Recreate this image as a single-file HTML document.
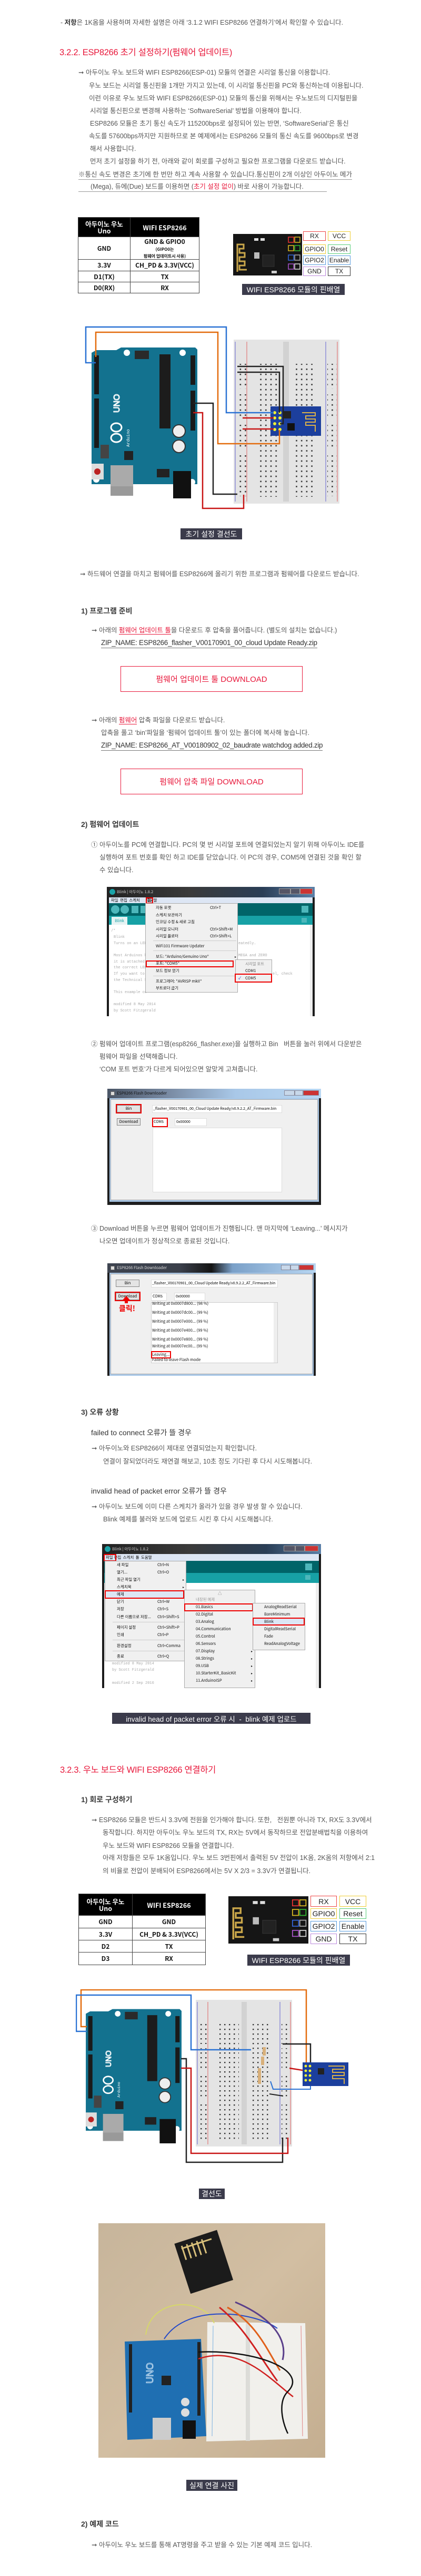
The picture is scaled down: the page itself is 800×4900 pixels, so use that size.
<!DOCTYPE html>
<html><head><meta charset="utf-8">
<style>
*{margin:0;padding:0;box-sizing:border-box}
body{width:800px;height:4900px;background:#fff;position:relative;overflow:hidden;font-family:"Liberation Sans","Noto Sans CJK KR",sans-serif}
.a{position:absolute}
.t{position:absolute;white-space:nowrap;font-size:12.5px;line-height:18px;color:#555;font-family:"Liberation Sans","Noto Sans CJK KR",sans-serif}
.h{position:absolute;white-space:nowrap;font-size:16.5px;line-height:22px;color:#e8173a;letter-spacing:-0.3px}
.s{position:absolute;white-space:nowrap;font-size:14px;line-height:20px;color:#3a3a3a;font-weight:bold}
.s2{position:absolute;white-space:nowrap;font-size:14px;line-height:20px;color:#333}
.r{color:#e8173a}
.ru{color:#e8173a;border-bottom:1px solid #e8173a}
.zip{position:absolute;white-space:nowrap;font-size:13.5px;line-height:18px;color:#333;border-bottom:1px solid #777;letter-spacing:-0.3px}
.box{position:absolute;border:1.5px solid #e8173a;color:#e8173a;font-size:15px;display:flex;align-items:center;justify-content:center}
.cap{position:absolute;background:#3b3b4b;color:#fff;font-size:14px;display:flex;align-items:center;justify-content:center;white-space:nowrap}
table.pt{position:absolute;border-collapse:collapse;font-family:"Noto Sans CJK KR",sans-serif;font-weight:bold;color:#111;text-align:center}
table.pt td{border:1.5px solid #444;padding:0;font-size:12px;line-height:13px}
table.pt tr.hd td{background:#000;color:#fff;font-size:12.5px}
.pl{position:absolute;width:43px;height:18px;border:1.5px solid;font-size:12px;display:flex;align-items:center;justify-content:center;background:#fff;color:#222}
.win{position:absolute;overflow:hidden;font-family:"Noto Sans CJK KR",sans-serif}
.mi{position:absolute;font-size:7.5px;line-height:10px;white-space:nowrap;color:#111}
.code{position:absolute;font-size:7px;line-height:9px;white-space:nowrap;color:#aaa;font-family:"Liberation Mono",monospace}
.rb{position:absolute;border:2px solid #e00}
</style></head><body>

<!-- Intro -->
<div class="t" style="left:115px;top:34px">- <b style="color:#333">저항</b>은 1K옴을 사용하며 자세한 설명은 아래 ‘3.1.2 WIFI ESP8266 연결하기’에서 확인할 수 있습니다.</div>

<div class="h" style="left:113px;top:89px">3.2.2. ESP8266 초기 설정하기(펌웨어 업데이트)</div>

<div class="t" style="left:149px;top:129px">➞ 아두이노 우노 보드와 WIFI ESP8266(ESP-01) 모듈의 연결은 시리얼 통신을 이용합니다.</div>
<div class="t" style="left:169px;top:154px">우노 보드는 시리얼 통신핀을 1개만 가지고 있는데, 이 시리얼 통신핀을 PC와 통신하는데 이용됩니다.</div>
<div class="t" style="left:169px;top:178px">이런 이유로 우노 보드와 WIFI ESP8266(ESP-01) 모듈의 통신을 위해서는 우노보드의 디지털핀을</div>
<div class="t" style="left:171px;top:202px">시리얼 통신핀으로 변경해 사용하는 ‘SoftwareSerial’ 방법을 이용해야 합니다.</div>
<div class="t" style="left:171px;top:226px">ESP8266 모듈은 초기 통신 속도가 115200bps로 설정되어 있는 반면, ‘SoftwareSerial’은 통신</div>
<div class="t" style="left:169px;top:250px">속도를 57600bps까지만 지원하므로 본 예제에서는 ESP8266 모듈의 통신 속도를 9600bps로 변경</div>
<div class="t" style="left:171px;top:274px">해서 사용합니다.</div>
<div class="t" style="left:171px;top:298px">먼저 초기 설정을 하기 전, 아래와 같이 회로를 구성하고 필요한 프로그램을 다운로드 받습니다.</div>
<div class="t" style="left:149px;top:323px;border-bottom:1px solid #999">※통신 속도 변경은 초기에 한 번만 하고 계속 사용할 수 있습니다.통신핀이 2개 이상인 아두이노 메가</div>
<div class="a" style="left:149px;top:346px;width:472px;height:19px;border-bottom:1px solid #999"></div>
<div class="t" style="left:172px;top:346px">(Mega), 듀에(Due) 보드를 이용하면 (<span class="r">초기 설정 없이</span>) 바로 사용이 가능합니다.</div>

<!-- Table 1 -->
<table class="pt" style="left:148px;top:413px;width:231px">
<tr class="hd" style="height:37px"><td style="width:99px">아두이노 우노<br>Uno</td><td>WIFI ESP8266</td></tr>
<tr style="height:43px"><td>GND</td><td>GND &amp; GPIO0<br><span style="font-size:8px;line-height:9px">(GIPO0는<br>펌웨어 업데이트시 사용)</span></td></tr>
<tr style="height:22px"><td>3.3V</td><td>CH_PD &amp; 3.3V(VCC)</td></tr>
<tr style="height:21px"><td>D1(TX)</td><td>TX</td></tr>
<tr style="height:21px"><td>D0(RX)</td><td>RX</td></tr>
</table>

<!-- ESP pin image 1 -->
<svg class="a" style="left:443px;top:445px" width="131" height="79" viewBox="0 0 131 79">
<rect width="131" height="79" fill="#151515"/>
<path d="M8 72 V20 h12 v8 h-8 v8 h10 v8 h-10 v8 h10 v8 h-10 v8 h14" stroke="#c9a64a" stroke-width="3" fill="none"/>
<rect x="40" y="8" width="8" height="5" fill="#ddd"/><rect x="52" y="8" width="8" height="5" fill="#ddd"/>
<rect x="56" y="40" width="22" height="22" fill="#222" stroke="#333"/>
<rect x="40" y="35" width="10" height="12" fill="#bbb"/>
<rect x="105" y="6" width="10" height="10" fill="none" stroke="#e33" stroke-width="1.5"/><rect x="117" y="6" width="10" height="10" fill="none" stroke="#db2" stroke-width="1.5"/>
<rect x="105" y="22" width="10" height="10" fill="none" stroke="#db2" stroke-width="1.5"/><rect x="117" y="22" width="10" height="10" fill="none" stroke="#3b3" stroke-width="1.5"/>
<rect x="105" y="40" width="10" height="10" fill="none" stroke="#36d" stroke-width="1.5"/><rect x="117" y="40" width="10" height="10" fill="none" stroke="#aaa" stroke-width="1.5"/>
<rect x="105" y="57" width="10" height="10" fill="none" stroke="#a5c" stroke-width="1.5"/><rect x="117" y="57" width="10" height="10" fill="none" stroke="#ddd" stroke-width="1.5"/>
<rect x="73" y="70" width="10" height="5" fill="#ccc"/>
</svg>
<div class="pl" style="left:576px;top:440px;border-color:#e44">RX</div><div class="pl" style="left:623px;top:440px;border-color:#ec3">VCC</div>
<div class="pl" style="left:576px;top:465px;border-color:#ec3">GPIO0</div><div class="pl" style="left:623px;top:465px;border-color:#5c7">Reset</div>
<div class="pl" style="left:576px;top:486px;border-color:#59d">GPIO2</div><div class="pl" style="left:623px;top:486px;border-color:#59d">Enable</div>
<div class="pl" style="left:576px;top:507px;border-color:#b8d">GND</div><div class="pl" style="left:623px;top:507px;border-color:#333">TX</div>
<div class="cap" style="left:460px;top:540px;width:195px;height:21px">WIFI ESP8266 모듈의 핀배열</div>

<!-- Diagram 1 -->
<svg class="a" style="left:161px;top:620px" width="484" height="350" viewBox="0 0 484 350">
<defs>
<pattern id="dt" width="9.7" height="9.7" patternUnits="userSpaceOnUse"><rect x="3.5" y="3.5" width="2.6" height="2.6" fill="#333"/></pattern>
</defs>
<rect x="283" y="26" width="201" height="312" fill="#e4e4e4"/>
<rect x="377" y="30" width="11" height="304" fill="#d2d2d2"/>
<line x1="286" y1="30" x2="286" y2="334" stroke="#44c" stroke-width="0.8"/><line x1="308" y1="30" x2="308" y2="334" stroke="#d44" stroke-width="0.8"/>
<line x1="458" y1="30" x2="458" y2="334" stroke="#44c" stroke-width="0.8"/><line x1="480" y1="30" x2="480" y2="334" stroke="#d44" stroke-width="0.8"/>
<rect x="329" y="72" width="42" height="253" fill="url(#dt)"/>
<rect x="397" y="72" width="42" height="253" fill="url(#dt)"/>
<rect x="289" y="72" width="18" height="48" fill="url(#dt)"/><rect x="289" y="130" width="18" height="48" fill="url(#dt)"/><rect x="289" y="188" width="18" height="48" fill="url(#dt)"/><rect x="289" y="246" width="18" height="78" fill="url(#dt)"/>
<rect x="461" y="72" width="18" height="48" fill="url(#dt)"/><rect x="461" y="130" width="18" height="48" fill="url(#dt)"/><rect x="461" y="188" width="18" height="48" fill="url(#dt)"/><rect x="461" y="246" width="18" height="78" fill="url(#dt)"/>
<!-- arduino -->
<path d="M13 51 L22 46 H60 L69 41 H210 L214 45 V301 H13 Z" fill="#13728f"/>
<rect x="18" y="56" width="9" height="74" fill="#1a1a1a"/><rect x="18" y="138" width="9" height="94" fill="#1a1a1a"/>
<rect x="201" y="56" width="9" height="56" fill="#1a1a1a"/><rect x="201" y="123" width="9" height="76" fill="#1a1a1a"/>
<rect x="142" y="54" width="21" height="141" fill="#1c1c1c"/>
<rect x="95" y="47" width="27" height="16" fill="#2a2a2a"/>
<circle cx="80" cy="51" r="6" fill="#fff"/><circle cx="186" cy="51" r="6" fill="#fff"/><circle cx="22" cy="292" r="6" fill="#fff"/><circle cx="204" cy="297" r="6" fill="#fff"/>
<circle cx="179" cy="200" r="12" fill="#eee" stroke="#333" stroke-width="2"/><circle cx="179" cy="229" r="12" fill="#eee" stroke="#333" stroke-width="2"/>
<rect x="75" y="238" width="17" height="17" fill="#222"/>
<rect x="30" y="226" width="16" height="26" fill="#444"/>
<rect x="13" y="262" width="23" height="30" fill="#ddd"/><circle cx="24" cy="277" r="6" fill="#b22"/>
<rect x="49" y="265" width="43" height="58" fill="#aaa"/><rect x="49" y="305" width="43" height="18" fill="#999"/>
<rect x="168" y="276" width="34" height="52" fill="#111"/>
<rect x="137" y="272" width="24" height="16" fill="#222"/>
<text transform="translate(66,165) rotate(-90)" font-size="16" fill="none" stroke="#fff" stroke-width="1.2" font-family="Liberation Sans">UNO</text>
<ellipse cx="60" cy="193" rx="10" ry="8" fill="none" stroke="#fff" stroke-width="3"/><ellipse cx="60" cy="213" rx="10" ry="8" fill="none" stroke="#fff" stroke-width="3"/>
<text transform="translate(85,230) rotate(-90)" font-size="8" fill="#fff" font-family="Liberation Mono">Arduino</text>
<!-- esp -->
<rect x="353" y="153" width="96" height="56" fill="#1c3f9d"/>
<path d="M413 165 h25 v6 h-18 v6 h18 v6 h-18 v6 h18 v12" stroke="#d9b04a" stroke-width="2" fill="none"/>
<rect x="378" y="162" width="14" height="14" fill="#222"/><rect x="385" y="185" width="14" height="14" fill="#111"/>
<circle cx="361" cy="165" r="3" fill="#ee3"/><circle cx="371" cy="165" r="3" fill="#ee3"/><circle cx="361" cy="175" r="3" fill="#ee3"/><circle cx="371" cy="175" r="3" fill="#ee3"/><circle cx="361" cy="186" r="3" fill="#ee3"/><circle cx="371" cy="186" r="3" fill="#ee3"/><circle cx="361" cy="197" r="3" fill="#ee3"/><circle cx="371" cy="197" r="3" fill="#ee3"/>
<!-- wires -->
<polyline points="21,59 21,12 253,12 253,224 370,224 370,198" fill="none" stroke="#e36b0c" stroke-width="2.5"/>
<polyline points="21,70 2,70 2,2 269,2 269,165 359,165" fill="none" stroke="#2a72d4" stroke-width="2.5"/>
<polyline points="206,147 244,147 244,320 290,320" fill="none" stroke="#222" stroke-width="2.5"/>
<polyline points="206,165 224,165 224,347 302,347 302,321" fill="none" stroke="#c81414" stroke-width="2.5"/>
<polyline points="290,77 377,77 377,186 371,186" fill="none" stroke="#222" stroke-width="2.5"/>
<polyline points="290,88 370,88 370,165" fill="none" stroke="#222" stroke-width="2.5"/>
<line x1="300" y1="175" x2="359" y2="175" stroke="#c81414" stroke-width="2.5"/>
<line x1="300" y1="196" x2="359" y2="196" stroke="#c81414" stroke-width="2.5"/>
</svg>
<div class="cap" style="left:343px;top:1005px;width:117px;height:21px">초기 설정 결선도</div>

<div class="t" style="left:152px;top:1083px">➞ 하드웨어 연결을 마치고 펌웨어를 ESP8266에 올리기 위한 프로그램과 펌웨어를 다운로드 받습니다.</div>

<div class="s" style="left:154px;top:1152px">1) 프로그램 준비</div>
<div class="t" style="left:174px;top:1190px">➞ 아래의 <span class="ru">펌웨어 업데이트 툴</span>을 다운로드 후 압축을 풀어줍니다. (별도의 설치는 없습니다.)</div>
<div class="zip" style="left:192px;top:1214px">ZIP_NAME: ESP8266_flasher_V00170901_00_cloud Update Ready.zip</div>
<div class="box" style="left:229px;top:1267px;width:346px;height:49px">펌웨어 업데이트 툴 DOWNLOAD</div>

<div class="t" style="left:174px;top:1361px">➞ 아래의 <span class="ru">펌웨어</span> 압축 파일을 다운로드 받습니다.</div>
<div class="t" style="left:192px;top:1385px">압축을 풀고 ‘bin’파일을 ‘펌웨어 업데이트 툴’이 있는 폴더에 복사해 놓습니다.</div>
<div class="zip" style="left:192px;top:1409px">ZIP_NAME: ESP8266_AT_V00180902_02_baudrate watchdog added.zip</div>
<div class="box" style="left:229px;top:1462px;width:346px;height:49px">펌웨어 압축 파일 DOWNLOAD</div>

<div class="s" style="left:154px;top:1558px">2) 펌웨어 업데이트</div>
<div class="t" style="left:173px;top:1598px">① 아두이노를 PC에 연결합니다. PC의 몇 번 시리얼 포트에 연결되었는지 알기 위해 아두이노 IDE를</div>
<div class="t" style="left:189px;top:1622px">실행하여 포트 번호를 확인 하고 IDE를 닫았습니다. 이 PC의 경우, COM5에 연결된 것을 확인 할</div>
<div class="t" style="left:189px;top:1646px">수 있습니다.</div>

<!-- Screenshot 1 -->
<div class="win" style="left:203px;top:1687px;width:395px;height:246px;background:#1b1b1b">
 <div class="a" style="left:0;top:0;width:395px;height:20px;background:linear-gradient(90deg,#222 0%,#3a3a3a 40%,#2a3e56 75%,#5a7fa8 100%)"></div>
 <div class="a" style="left:5px;top:4px;width:11px;height:11px;border-radius:50%;background:#1aa3a8"></div>
 <div class="mi" style="left:19px;top:5px;color:#ccc">Blink | 아두이노 1.8.2</div>
 <div class="a" style="left:327px;top:3px;width:22px;height:11px;background:#556;border:1px solid #999"></div>
 <div class="a" style="left:349px;top:3px;width:18px;height:11px;background:#556;border:1px solid #999"></div>
 <div class="a" style="left:367px;top:3px;width:24px;height:11px;background:#c33;border:1px solid #999"></div>
 <div class="a" style="left:4px;top:20px;width:387px;height:11px;background:#dde6f4"></div>
 <div class="mi" style="left:8px;top:21px">파일 &nbsp;편집 &nbsp;스케치 &nbsp;&nbsp;&nbsp;&nbsp;&nbsp;&nbsp;도움말</div>
 <div class="mi" style="left:77px;top:21px">툴</div>
 <div class="rb" style="left:74px;top:20px;width:14px;height:12px"></div>
 <div class="a" style="left:4px;top:31px;width:387px;height:24px;background:#006468"></div>
 <div class="a" style="left:8px;top:35px;width:16px;height:16px;border-radius:50%;background:#4db7bb"></div>
 <div class="a" style="left:26px;top:35px;width:16px;height:16px;border-radius:50%;background:#4db7bb"></div>
 <div class="a" style="left:47px;top:36px;width:13px;height:14px;background:#4db7bb"></div>
 <div class="a" style="left:64px;top:36px;width:13px;height:14px;background:#4db7bb"></div>
 <div class="a" style="left:370px;top:36px;width:13px;height:13px;background:#4db7bb"></div>
 <div class="a" style="left:4px;top:55px;width:387px;height:17px;background:#17a1a5"></div>
 <div class="a" style="left:9px;top:57px;width:30px;height:15px;background:#e6f3f3;font-size:7.5px;color:#17a1a5;text-align:center;line-height:15px">Blink</div>
 <div class="a" style="left:370px;top:59px;width:10px;height:9px;background:#4db7bb"></div>
 <div class="a" style="left:4px;top:72px;width:382px;height:174px;background:#fff"></div>
 <div class="a" style="left:386px;top:72px;width:5px;height:174px;background:#eee"></div>
 <div class="code" style="left:8px;top:80px">/*</div>
 <div class="code" style="left:13px;top:92px">Blink</div>
 <div class="code" style="left:13px;top:104px">Turns on an LED</div>
 <div class="code" style="left:250px;top:104px">eatedly.</div>
 <div class="code" style="left:13px;top:127px">Most Arduinos h</div>
 <div class="code" style="left:250px;top:127px">MEGA and ZERO</div>
 <div class="code" style="left:13px;top:139px">it is attached</div>
 <div class="code" style="left:13px;top:150px">the correct LED</div>
 <div class="code" style="left:13px;top:162px">If you want to</div>
 <div class="code" style="left:315px;top:162px">el, check</div>
 <div class="code" style="left:13px;top:174px">the Technical S</div>
 <div class="code" style="left:13px;top:197px">This example co</div>
 <div class="code" style="left:13px;top:220px">modified 8 May 2014</div>
 <div class="code" style="left:13px;top:232px">by Scott Fitzgerald</div>
 <div class="a" style="left:73px;top:31px;width:176px;height:170px;background:#f0f0f0;border:1px solid #aaa"></div>
 <div class="mi" style="left:93px;top:35px">자동 포맷</div><div class="mi" style="left:196px;top:35px">Ctrl+T</div>
 <div class="mi" style="left:93px;top:49px">스케치 보관하기</div>
 <div class="mi" style="left:93px;top:62px">인코딩 수정 &amp; 새로 고침</div>
 <div class="mi" style="left:93px;top:76px">시리얼 모니터</div><div class="mi" style="left:196px;top:76px">Ctrl+Shift+M</div>
 <div class="mi" style="left:93px;top:89px">시리얼 플로터</div><div class="mi" style="left:196px;top:89px">Ctrl+Shift+L</div>
 <div class="a" style="left:88px;top:102px;width:158px;height:1px;background:#ccc"></div>
 <div class="mi" style="left:93px;top:108px">WiFi101 Firmware Updater</div>
 <div class="a" style="left:88px;top:121px;width:158px;height:1px;background:#ccc"></div>
 <div class="mi" style="left:93px;top:128px">보드: "Arduino/Genuino Uno"</div><div class="mi" style="left:243px;top:128px;font-size:6px">▸</div>
 <div class="mi" style="left:93px;top:141px">포트: "COM5"</div>
 <div class="rb" style="left:74px;top:140px;width:167px;height:13px"></div>
 <div class="mi" style="left:93px;top:155px">보드 정보 얻기</div>
 <div class="a" style="left:88px;top:169px;width:158px;height:1px;background:#ccc"></div>
 <div class="mi" style="left:93px;top:175px">프로그래머: "AVRISP mkII"</div>
 <div class="mi" style="left:93px;top:188px">부트로더 굽기</div>
 <div class="a" style="left:244px;top:138px;width:70px;height:44px;background:#f0f0f0;border:1px solid #aaa"></div>
 <div class="mi" style="left:263px;top:142px;color:#888">시리얼 포트</div>
 <div class="mi" style="left:263px;top:155px">COM1</div>
 <div class="mi" style="left:250px;top:169px;color:#22c">✓</div><div class="mi" style="left:263px;top:169px">COM5</div>
 <div class="rb" style="left:243px;top:165px;width:71px;height:17px"></div>
</div>

<div class="t" style="left:173px;top:1977px">② 펌웨어 업데이트 프로그램(esp8266_flasher.exe)을 실행하고 Bin &nbsp;&nbsp;버튼을 눌러 위에서 다운받은</div>
<div class="t" style="left:189px;top:2001px">펌웨어 파일을 선택해줍니다.</div>
<div class="t" style="left:189px;top:2025px">‘COM 포트 번호’가 다르게 되어있으면 알맞게 고쳐줍니다.</div>

<!-- Screenshot 2 -->
<div class="win" style="left:204px;top:2071px;width:406px;height:221px;background:#1e1e1e">
 <div class="a" style="left:0;top:0;width:406px;height:18px;background:linear-gradient(90deg,#4a5566 0%,#7b8da6 30%,#a9c8e8 60%,#b8d6f2 100%)"></div>
 <div class="a" style="left:6px;top:5px;width:8px;height:8px;background:#ddd;border:1px solid #666"></div>
 <div class="mi" style="left:18px;top:4px;color:#111">ESP8266 Flash Downloader</div>
 <div class="a" style="left:336px;top:3px;width:20px;height:10px;background:#c8d8ea;border:1px solid #889"></div>
 <div class="a" style="left:356px;top:3px;width:16px;height:10px;background:#c8d8ea;border:1px solid #889"></div>
 <div class="a" style="left:372px;top:3px;width:30px;height:10px;background:#c33;border:1px solid #889"></div>
 <div class="a" style="left:4px;top:18px;width:398px;height:197px;background:#a9c8e8"></div>
 <div class="a" style="left:6px;top:20px;width:394px;height:192px;background:#f0f0f0;border:1px solid #aaa"></div>
 <div class="a" style="left:18px;top:31px;width:45px;height:14px;background:#e4e4e4;border:1px solid #888;font-size:7.5px;text-align:center;line-height:12px">Bin</div>
 <div class="rb" style="left:16px;top:29px;width:49px;height:18px"></div>
 <div class="a" style="left:18px;top:56px;width:45px;height:14px;background:#e4e4e4;border:1px solid #888;font-size:7.5px;text-align:center;line-height:12px">Download</div>
 <div class="a" style="left:85px;top:31px;width:247px;height:15px;background:#fff;border:1px solid #ddd;font-size:7px;line-height:13px;white-space:nowrap;padding-left:1px">_flasher_V00170901_00_Cloud Update Ready/v0.9.2.2_AT_Firmware.bin</div>
 <div class="a" style="left:86px;top:56px;width:28px;height:15px;background:#fff;font-size:7px;line-height:15px;padding-left:2px">COM5</div>
 <div class="rb" style="left:85px;top:55px;width:30px;height:18px"></div>
 <div class="a" style="left:128px;top:56px;width:61px;height:15px;background:#fff;border:1px solid #ddd;font-size:7px;line-height:13px;padding-left:2px">0x00000</div>
 <div class="a" style="left:86px;top:74px;width:246px;height:123px;background:#fff;border:1px solid #ddd"></div>
</div>

<div class="t" style="left:173px;top:2328px">③ Download 버튼을 누르면 펌웨어 업데이트가 진행됩니다. 맨 마지막에 ‘Leaving...’ 메시지가</div>
<div class="t" style="left:189px;top:2352px">나오면 업데이트가 정상적으로 종료된 것입니다.</div>

<!-- Screenshot 3 -->
<div class="win" style="left:204px;top:2403px;width:396px;height:214px;background:#1e1e1e">
 <div class="a" style="left:0;top:0;width:396px;height:18px;background:linear-gradient(90deg,#3e4450 0%,#3a3f4a 35%,#141414 50%,#7aa0c8 60%,#b8d6f2 100%)"></div>
 <div class="a" style="left:6px;top:5px;width:8px;height:8px;background:#ddd;border:1px solid #666"></div>
 <div class="mi" style="left:18px;top:4px;color:#ddd">ESP8266 Flash Downloader</div>
 <div class="a" style="left:330px;top:3px;width:18px;height:10px;background:#c8d8ea;border:1px solid #889"></div>
 <div class="a" style="left:348px;top:3px;width:16px;height:10px;background:#c8d8ea;border:1px solid #889"></div>
 <div class="a" style="left:364px;top:3px;width:28px;height:10px;background:#c33;border:1px solid #889"></div>
 <div class="a" style="left:4px;top:18px;width:388px;height:196px;background:#a9c8e8"></div>
 <div class="a" style="left:6px;top:20px;width:384px;height:191px;background:#f0f0f0;border:1px solid #aaa"></div>
 <div class="a" style="left:16px;top:31px;width:45px;height:14px;background:#e4e4e4;border:1px solid #888;font-size:7.5px;text-align:center;line-height:12px">Bin</div>
 <div class="a" style="left:16px;top:56px;width:45px;height:14px;background:#e4e4e4;border:1px solid #888;font-size:7.5px;text-align:center;line-height:12px">Download</div>
 <div class="rb" style="left:14px;top:54px;width:49px;height:18px"></div>
 <div class="a" style="left:29px;top:62px;width:0;height:0;border-left:7px solid transparent;border-right:7px solid transparent;border-bottom:8px solid #e00"></div>
 <div class="a" style="left:33px;top:69px;width:6px;height:7px;background:#e00"></div>
 <div class="a" style="left:22px;top:76px;font-size:14px;font-weight:bold;color:#e00;white-space:nowrap">클릭!</div>
 <div class="a" style="left:83px;top:31px;width:241px;height:15px;background:#fff;border:1px solid #ddd;font-size:7px;line-height:13px;white-space:nowrap;padding-left:1px">_flasher_V00170901_00_Cloud Update Ready/v0.9.2.2_AT_Firmware.bin</div>
 <div class="a" style="left:83px;top:56px;width:30px;height:15px;background:#fff;border:1px solid #ddd;font-size:7px;line-height:13px;padding-left:2px">COM5</div>
 <div class="a" style="left:127px;top:56px;width:59px;height:15px;background:#fff;border:1px solid #ddd;font-size:7px;line-height:13px;padding-left:2px">0x00000</div>
 <div class="a" style="left:83px;top:74px;width:241px;height:116px;background:#fff;border:1px solid #ccc"></div>
 <div class="a" style="left:316px;top:75px;width:7px;height:114px;background:#eee"></div>
 <div class="mi" style="left:85px;top:72px">Writing at 0x0007d800... (98 %)</div>
 <div class="mi" style="left:85px;top:89px">Writing at 0x0007dc00... (99 %)</div>
 <div class="mi" style="left:85px;top:106px">Writing at 0x0007e000... (99 %)</div>
 <div class="mi" style="left:85px;top:123px">Writing at 0x0007e400... (99 %)</div>
 <div class="mi" style="left:85px;top:140px">Writing at 0x0007e800... (99 %)</div>
 <div class="mi" style="left:85px;top:153px">Writing at 0x0007ec00... (99 %)</div>
 <div class="mi" style="left:85px;top:169px">Leaving...</div>
 <div class="rb" style="left:83px;top:167px;width:38px;height:14px"></div>
 <div class="mi" style="left:85px;top:179px">Failed to leave Flash mode</div>
</div>

<div class="s" style="left:154px;top:2676px">3) 오류 상황</div>
<div class="s2" style="left:173px;top:2715px">failed to connect 오류가 뜰 경우</div>
<div class="t" style="left:174px;top:2746px">➞ 아두이노와 ESP8266이 제대로 연결되었는지 확인합니다.</div>
<div class="t" style="left:196px;top:2771px">연결이 잘되었더라도 재연결 해보고, 10초 정도 기다린 후 다시 시도해봅니다.</div>
<div class="s2" style="left:173px;top:2826px">invalid head of packet error 오류가 뜰 경우</div>
<div class="t" style="left:174px;top:2857px">➞ 아두이노 보드에 이미 다른 스케치가 올라가 있을 경우 발생 할 수 있습니다.</div>
<div class="t" style="left:196px;top:2881px">Blink 예제를 불러와 보드에 업로드 시킨 후 다시 시도해봅니다.</div>

<!-- Screenshot 4 -->
<div class="win" style="left:194px;top:2937px;width:416px;height:274px;background:#1b1b1b">
 <div class="a" style="left:0;top:0;width:416px;height:19px;background:linear-gradient(90deg,#222 0%,#3a3a3a 40%,#2a3e56 75%,#5a7fa8 100%)"></div>
 <div class="a" style="left:5px;top:4px;width:11px;height:11px;border-radius:50%;background:#1aa3a8"></div>
 <div class="mi" style="left:19px;top:5px;color:#ccc">Blink | 아두이노 1.8.2</div>
 <div class="a" style="left:345px;top:3px;width:22px;height:11px;background:#556;border:1px solid #999"></div>
 <div class="a" style="left:367px;top:3px;width:18px;height:11px;background:#556;border:1px solid #999"></div>
 <div class="a" style="left:385px;top:3px;width:26px;height:11px;background:#c33;border:1px solid #999"></div>
 <div class="a" style="left:4px;top:19px;width:408px;height:13px;background:#dde6f4"></div>
 <div class="mi" style="left:7px;top:21px">파일 편집 &nbsp;스케치 &nbsp;툴 &nbsp;도움말</div>
 <div class="rb" style="left:3px;top:19px;width:24px;height:14px"></div>
 <div class="a" style="left:4px;top:32px;width:408px;height:23px;background:#006468"></div>
 <div class="a" style="left:386px;top:37px;width:13px;height:13px;background:#4db7bb"></div>
 <div class="a" style="left:4px;top:55px;width:408px;height:19px;background:#17a1a5"></div>
 <div class="a" style="left:386px;top:59px;width:10px;height:9px;background:#4db7bb"></div>
 <div class="a" style="left:4px;top:74px;width:402px;height:200px;background:#fff"></div>
 <div class="a" style="left:406px;top:74px;width:6px;height:200px;background:#eee"></div>
 <div class="code" style="left:19px;top:224px">modified 8 May 2014</div>
 <div class="code" style="left:19px;top:236px">by Scott Fitzgerald</div>
 <div class="code" style="left:19px;top:261px">modified 2 Sep 2016</div>
 <div class="a" style="left:5px;top:32px;width:155px;height:191px;background:#f0f0f0;border:1px solid #aaa"></div>
 <div class="mi" style="left:28px;top:35px">새 파일</div><div class="mi" style="left:105px;top:35px">Ctrl+N</div>
 <div class="mi" style="left:28px;top:49px">열기...</div><div class="mi" style="left:105px;top:49px">Ctrl+O</div>
 <div class="mi" style="left:28px;top:63px">최근 파일 열기</div><div class="mi" style="left:153px;top:63px;font-size:6px">▸</div>
 <div class="mi" style="left:28px;top:77px">스케치북</div><div class="mi" style="left:153px;top:77px;font-size:6px">▸</div>
 <div class="a" style="left:6px;top:88px;width:150px;height:15px;background:#dce6f4"></div>
 <div class="mi" style="left:28px;top:91px">예제</div>
 <div class="rb" style="left:5px;top:88px;width:151px;height:16px"></div>
 <div class="mi" style="left:28px;top:105px">닫기</div><div class="mi" style="left:105px;top:105px">Ctrl+W</div>
 <div class="mi" style="left:28px;top:119px">저장</div><div class="mi" style="left:105px;top:119px">Ctrl+S</div>
 <div class="mi" style="left:28px;top:134px">다른 이름으로 저장...</div><div class="mi" style="left:105px;top:134px">Ctrl+Shift+S</div>
 <div class="a" style="left:20px;top:148px;width:138px;height:1px;background:#ccc"></div>
 <div class="mi" style="left:28px;top:154px">페이지 설정</div><div class="mi" style="left:105px;top:154px">Ctrl+Shift+P</div>
 <div class="mi" style="left:28px;top:168px">인쇄</div><div class="mi" style="left:105px;top:168px">Ctrl+P</div>
 <div class="a" style="left:20px;top:182px;width:138px;height:1px;background:#ccc"></div>
 <div class="mi" style="left:28px;top:189px">환경설정</div><div class="mi" style="left:105px;top:189px">Ctrl+Comma</div>
 <div class="a" style="left:20px;top:203px;width:138px;height:1px;background:#ccc"></div>
 <div class="mi" style="left:28px;top:209px">종료</div><div class="mi" style="left:105px;top:209px">Ctrl+Q</div>
 <div class="a" style="left:156px;top:87px;width:135px;height:187px;background:#f0f0f0;border:1px solid #aaa"></div>
 <div class="mi" style="left:220px;top:89px;color:#666">△</div>
 <div class="mi" style="left:178px;top:101px;color:#999">내장된 예제</div>
 <div class="mi" style="left:178px;top:115px">01.Basics</div>
 <div class="rb" style="left:156px;top:113px;width:131px;height:15px"></div>
 <div class="mi" style="left:178px;top:129px">02.Digital</div>
 <div class="mi" style="left:178px;top:143px">03.Analog</div>
 <div class="mi" style="left:178px;top:157px">04.Communication</div>
 <div class="mi" style="left:178px;top:171px">05.Control</div>
 <div class="mi" style="left:178px;top:185px">06.Sensors</div>
 <div class="mi" style="left:178px;top:199px">07.Display</div><div class="mi" style="left:283px;top:199px;font-size:6px">▸</div>
 <div class="mi" style="left:178px;top:213px">08.Strings</div><div class="mi" style="left:283px;top:213px;font-size:6px">▸</div>
 <div class="mi" style="left:178px;top:227px">09.USB</div><div class="mi" style="left:283px;top:227px;font-size:6px">▸</div>
 <div class="mi" style="left:178px;top:241px">10.StarterKit_BasicKit</div><div class="mi" style="left:283px;top:241px;font-size:6px">▸</div>
 <div class="mi" style="left:178px;top:255px">11.ArduinoISP</div><div class="mi" style="left:283px;top:255px;font-size:6px">▸</div>
 <div class="a" style="left:286px;top:112px;width:100px;height:90px;background:#f0f0f0;border:1px solid #aaa"></div>
 <div class="mi" style="left:308px;top:115px">AnalogReadSerial</div>
 <div class="mi" style="left:308px;top:129px">BareMinimum</div>
 <div class="a" style="left:287px;top:141px;width:97px;height:13px;background:#dce6f4"></div>
 <div class="mi" style="left:308px;top:143px">Blink</div>
 <div class="rb" style="left:286px;top:140px;width:99px;height:15px"></div>
 <div class="mi" style="left:308px;top:157px">DigitalReadSerial</div>
 <div class="mi" style="left:308px;top:171px">Fade</div>
 <div class="mi" style="left:308px;top:185px">ReadAnalogVoltage</div>
</div>
<div class="cap" style="left:213px;top:3258px;width:377px;height:21px;font-size:13.5px">invalid head of packet error 오류 시 &nbsp;- &nbsp;blink 예제 업로드</div>

<!-- 3.2.3 -->
<div class="h" style="left:114px;top:3356px">3.2.3. 우노 보드와 WIFI ESP8266 연결하기</div>
<div class="s" style="left:154px;top:3413px">1) 회로 구성하기</div>
<div class="t" style="left:174px;top:3453px">➞ ESP8266 모듈은 반드시 3.3V에 전원을 인가해야 합니다. 또한, &nbsp;&nbsp;전원뿐 아니라 TX, RX도 3.3V에서</div>
<div class="t" style="left:195px;top:3477px">동작합니다. 하지만 아두이노 우노 보드의 TX, RX는 5V에서 동작하므로 전압분배법칙을 이용하여</div>
<div class="t" style="left:195px;top:3502px">우노 보드와 WIFI ESP8266 모듈을 연결합니다.</div>
<div class="t" style="left:195px;top:3525px">아래 저항들은 모두 1K옴입니다. 우노 보드 3번핀에서 출력된 5V 전압이 1K옴, 2K옴의 저항에서 2:1</div>
<div class="t" style="left:195px;top:3550px">의 비율로 전압이 분배되어 ESP8266에서는 5V X 2/3 = 3.3V가 연결됩니다.</div>

<table class="pt" style="left:149px;top:3602px;width:242px">
<tr class="hd" style="height:41px"><td style="width:102px">아두이노 우노<br>Uno</td><td>WIFI ESP8266</td></tr>
<tr style="height:24px"><td>GND</td><td>GND</td></tr>
<tr style="height:23px"><td>3.3V</td><td>CH_PD &amp; 3.3V(VCC)</td></tr>
<tr style="height:23px"><td>D2</td><td>TX</td></tr>
<tr style="height:24px"><td>D3</td><td>RX</td></tr>
</table>

<svg class="a" style="left:434px;top:3607px" width="152" height="90" viewBox="0 0 131 79" preserveAspectRatio="none">
<rect width="131" height="79" fill="#151515"/>
<path d="M8 72 V20 h12 v8 h-8 v8 h10 v8 h-10 v8 h10 v8 h-10 v8 h14" stroke="#c9a64a" stroke-width="3" fill="none"/>
<rect x="40" y="8" width="8" height="5" fill="#ddd"/><rect x="52" y="8" width="8" height="5" fill="#ddd"/>
<rect x="56" y="40" width="22" height="22" fill="#222" stroke="#333"/>
<rect x="40" y="35" width="10" height="12" fill="#bbb"/>
<rect x="105" y="6" width="10" height="10" fill="none" stroke="#e33" stroke-width="1.5"/><rect x="117" y="6" width="10" height="10" fill="none" stroke="#db2" stroke-width="1.5"/>
<rect x="105" y="22" width="10" height="10" fill="none" stroke="#db2" stroke-width="1.5"/><rect x="117" y="22" width="10" height="10" fill="none" stroke="#3b3" stroke-width="1.5"/>
<rect x="105" y="40" width="10" height="10" fill="none" stroke="#36d" stroke-width="1.5"/><rect x="117" y="40" width="10" height="10" fill="none" stroke="#aaa" stroke-width="1.5"/>
<rect x="105" y="57" width="10" height="10" fill="none" stroke="#a5c" stroke-width="1.5"/><rect x="117" y="57" width="10" height="10" fill="none" stroke="#ddd" stroke-width="1.5"/>
<rect x="73" y="70" width="10" height="5" fill="#ccc"/>
</svg>
<div class="pl" style="left:590px;top:3606px;width:50px;height:21px;font-size:14px;border-color:#e44">RX</div><div class="pl" style="left:645px;top:3606px;width:51px;height:21px;font-size:14px;border-color:#ec3">VCC</div>
<div class="pl" style="left:590px;top:3630px;width:50px;height:20px;font-size:14px;border-color:#ec3">GPIO0</div><div class="pl" style="left:645px;top:3630px;width:51px;height:20px;font-size:14px;border-color:#5c7">Reset</div>
<div class="pl" style="left:590px;top:3654px;width:50px;height:20px;font-size:14px;border-color:#59d">GPIO2</div><div class="pl" style="left:645px;top:3654px;width:51px;height:20px;font-size:14px;border-color:#59d">Enable</div>
<div class="pl" style="left:590px;top:3678px;width:50px;height:20px;font-size:14px;border-color:#b8d">GND</div><div class="pl" style="left:645px;top:3678px;width:51px;height:20px;font-size:14px;border-color:#333">TX</div>
<div class="cap" style="left:470px;top:3718px;width:195px;height:21px">WIFI ESP8266 모듈의 핀배열</div>

<!-- Diagram 2 -->
<svg class="a" style="left:144px;top:3784px" width="518" height="331" viewBox="0 0 518 331">
<defs>
<pattern id="dt2" width="9" height="9" patternUnits="userSpaceOnUse"><rect x="3" y="3" width="2.4" height="2.4" fill="#333"/></pattern>
</defs>
<rect x="228" y="20" width="183" height="279" fill="#e4e4e4"/>
<rect x="315" y="24" width="10" height="271" fill="#d2d2d2"/>
<line x1="231" y1="24" x2="231" y2="295" stroke="#44c" stroke-width="0.8"/><line x1="251" y1="24" x2="251" y2="295" stroke="#d44" stroke-width="0.8"/>
<line x1="388" y1="24" x2="388" y2="295" stroke="#44c" stroke-width="0.8"/><line x1="408" y1="24" x2="408" y2="295" stroke="#d44" stroke-width="0.8"/>
<rect x="268" y="60" width="42" height="228" fill="url(#dt2)"/>
<rect x="330" y="60" width="42" height="228" fill="url(#dt2)"/>
<rect x="233" y="60" width="16" height="44" fill="url(#dt2)"/><rect x="233" y="112" width="16" height="44" fill="url(#dt2)"/><rect x="233" y="164" width="16" height="44" fill="url(#dt2)"/><rect x="233" y="216" width="16" height="72" fill="url(#dt2)"/>
<rect x="391" y="60" width="16" height="44" fill="url(#dt2)"/><rect x="391" y="112" width="16" height="44" fill="url(#dt2)"/><rect x="391" y="164" width="16" height="44" fill="url(#dt2)"/><rect x="391" y="216" width="16" height="72" fill="url(#dt2)"/>
<g transform="translate(7.3,1.1) scale(0.905,0.89)">
<path d="M13 51 L22 46 H60 L69 41 H210 L214 45 V301 H13 Z" fill="#13728f"/>
<rect x="18" y="56" width="9" height="74" fill="#1a1a1a"/><rect x="18" y="138" width="9" height="94" fill="#1a1a1a"/>
<rect x="201" y="56" width="9" height="56" fill="#1a1a1a"/><rect x="201" y="123" width="9" height="76" fill="#1a1a1a"/>
<rect x="142" y="54" width="21" height="141" fill="#1c1c1c"/>
<rect x="95" y="47" width="27" height="16" fill="#2a2a2a"/>
<circle cx="80" cy="51" r="6" fill="#fff"/><circle cx="186" cy="51" r="6" fill="#fff"/><circle cx="22" cy="292" r="6" fill="#fff"/><circle cx="204" cy="297" r="6" fill="#fff"/>
<circle cx="179" cy="200" r="12" fill="#eee" stroke="#333" stroke-width="2"/><circle cx="179" cy="229" r="12" fill="#eee" stroke="#333" stroke-width="2"/>
<rect x="75" y="238" width="17" height="17" fill="#222"/>
<rect x="30" y="226" width="16" height="26" fill="#444"/>
<rect x="13" y="262" width="23" height="30" fill="#ddd"/><circle cx="24" cy="277" r="6" fill="#b22"/>
<rect x="49" y="265" width="43" height="58" fill="#aaa"/><rect x="49" y="305" width="43" height="18" fill="#999"/>
<rect x="168" y="276" width="34" height="52" fill="#111"/>
<rect x="137" y="272" width="24" height="16" fill="#222"/>
<text transform="translate(66,165) rotate(-90)" font-size="16" fill="none" stroke="#fff" stroke-width="1.2" font-family="Liberation Sans">UNO</text>
<ellipse cx="60" cy="193" rx="10" ry="8" fill="none" stroke="#fff" stroke-width="3"/><ellipse cx="60" cy="213" rx="10" ry="8" fill="none" stroke="#fff" stroke-width="3"/>
<text transform="translate(85,230) rotate(-90)" font-size="8" fill="#fff" font-family="Liberation Mono">Arduino</text>
</g>
<rect x="431" y="139" width="87" height="45" fill="#1c3f9d"/>
<path d="M480 146 h30 v6 h-22 v6 h22 v6 h-22 v6 h22 v10" stroke="#d9b04a" stroke-width="2" fill="none"/>
<rect x="460" y="150" width="12" height="12" fill="#222"/>
<circle cx="437" cy="146" r="2.5" fill="#ee3"/><circle cx="445" cy="146" r="2.5" fill="#ee3"/><circle cx="437" cy="155" r="2.5" fill="#ee3"/><circle cx="445" cy="155" r="2.5" fill="#ee3"/><circle cx="437" cy="164" r="2.5" fill="#ee3"/><circle cx="445" cy="164" r="2.5" fill="#ee3"/><circle cx="437" cy="173" r="2.5" fill="#ee3"/><circle cx="445" cy="173" r="2.5" fill="#ee3"/>
<rect x="355" y="110" width="6" height="16" fill="#d8b07a"/><rect x="352" y="128" width="6" height="16" fill="#d8b07a"/><rect x="346" y="150" width="6" height="16" fill="#d8b07a"/><rect x="346" y="166" width="6" height="14" fill="#d8b07a"/>
<polyline points="21,71 10,71 10,1 438,1 438,139" fill="none" stroke="#e36b0c" stroke-width="2.5"/>
<polyline points="21,80 1,80 1,11 219,11 219,115 333,115" fill="none" stroke="#2a72d4" stroke-width="2.5"/>
<polyline points="200,132 210,132 210,329 393,329 393,282" fill="none" stroke="#222" stroke-width="2.5"/>
<polyline points="200,150 219,150 219,312 403,312 403,282" fill="none" stroke="#c81414" stroke-width="2.5"/>
<polyline points="393,104 446,104 446,139" fill="none" stroke="#222" stroke-width="2.5"/>
<polyline points="406,150 431,154" fill="none" stroke="#c81414" stroke-width="2.5"/>
<polyline points="370,175 375,190 446,190 446,184" fill="none" stroke="#2a72d4" stroke-width="2"/>
<line x1="368" y1="199" x2="394" y2="203" stroke="#222" stroke-width="2"/>
</svg>
<div class="cap" style="left:378px;top:4163px;width:49px;height:20px">결선도</div>

<!-- Photo -->
<svg class="a" style="left:187px;top:4229px" width="431" height="446" viewBox="0 0 431 446">
<defs><linearGradient id="bg" x1="0" y1="0" x2="1" y2="1"><stop offset="0" stop-color="#c7b59b"/><stop offset="0.5" stop-color="#d2bea2"/><stop offset="1" stop-color="#c4ae90"/></linearGradient></defs>
<rect width="431" height="446" fill="url(#bg)"/>
<path d="M207 188 L393 190 L398 410 L205 415 Z" fill="#f1f0ec"/>
<rect x="280" y="188" width="8" height="226" fill="#dcdcd8"/>
<line x1="218" y1="195" x2="216" y2="405" stroke="#7bb0e0" stroke-width="1"/><line x1="385" y1="195" x2="388" y2="405" stroke="#e08080" stroke-width="1"/>
<path d="M50 225 L195 220 L205 405 L55 412 Z" fill="#1f6fb2"/>
<rect x="58" y="230" width="6" height="130" fill="#222"/><rect x="188" y="226" width="6" height="140" fill="#222"/>
<rect x="120" y="290" width="18" height="18" fill="#222"/>
<rect x="103" y="370" width="35" height="42" fill="#ccc"/>
<rect x="160" y="375" width="25" height="35" fill="#111"/>
<circle cx="165" cy="340" r="8" fill="#ddd"/><circle cx="165" cy="360" r="8" fill="#ddd"/>
<text transform="translate(104,305) rotate(-90)" font-size="18" fill="none" stroke="#cfe4f5" font-family="Liberation Sans">UNO</text>
<g transform="rotate(-18 206 80)"><rect x="160" y="22" width="85" height="100" fill="#1b1b1b"/><path d="M170 35 h60 M172 30 v28 M182 30 v28 M192 30 v28 M202 30 v28 M212 30 v28" stroke="#d8bf7a" stroke-width="3"/></g>
<path d="M140 222 C150 150 250 150 270 200" stroke="#d6d86a" stroke-width="2" fill="none" transform="translate(-50,-10)"/>
<path d="M125 220 C170 150 300 170 340 200" stroke="#2248c8" stroke-width="2" fill="none"/>
<path d="M230 160 C280 200 310 260 340 300" stroke="#d02020" stroke-width="3" fill="none"/>
<path d="M245 160 C300 190 320 240 345 280" stroke="#e0601a" stroke-width="3" fill="none"/>
<path d="M260 150 C330 180 360 220 350 260" stroke="#5a3f8a" stroke-width="3" fill="none"/>
<path d="M190 258 C270 230 330 300 370 330" stroke="#d02020" stroke-width="2.5" fill="none"/>
<path d="M190 245 C300 240 400 280 360 320 C340 340 350 380 360 400" stroke="#111" stroke-width="2.5" fill="none"/>
</svg>
<div class="cap" style="left:354px;top:4717px;width:97px;height:21px">실제 연결 사진</div>

<div class="s" style="left:154px;top:4791px">2) 예제 코드</div>
<div class="t" style="left:174px;top:4832px">➞ 아두이노 우노 보드를 통해 AT명령을 주고 받을 수 있는 기본 예제 코드 입니다.</div>

</body></html>
